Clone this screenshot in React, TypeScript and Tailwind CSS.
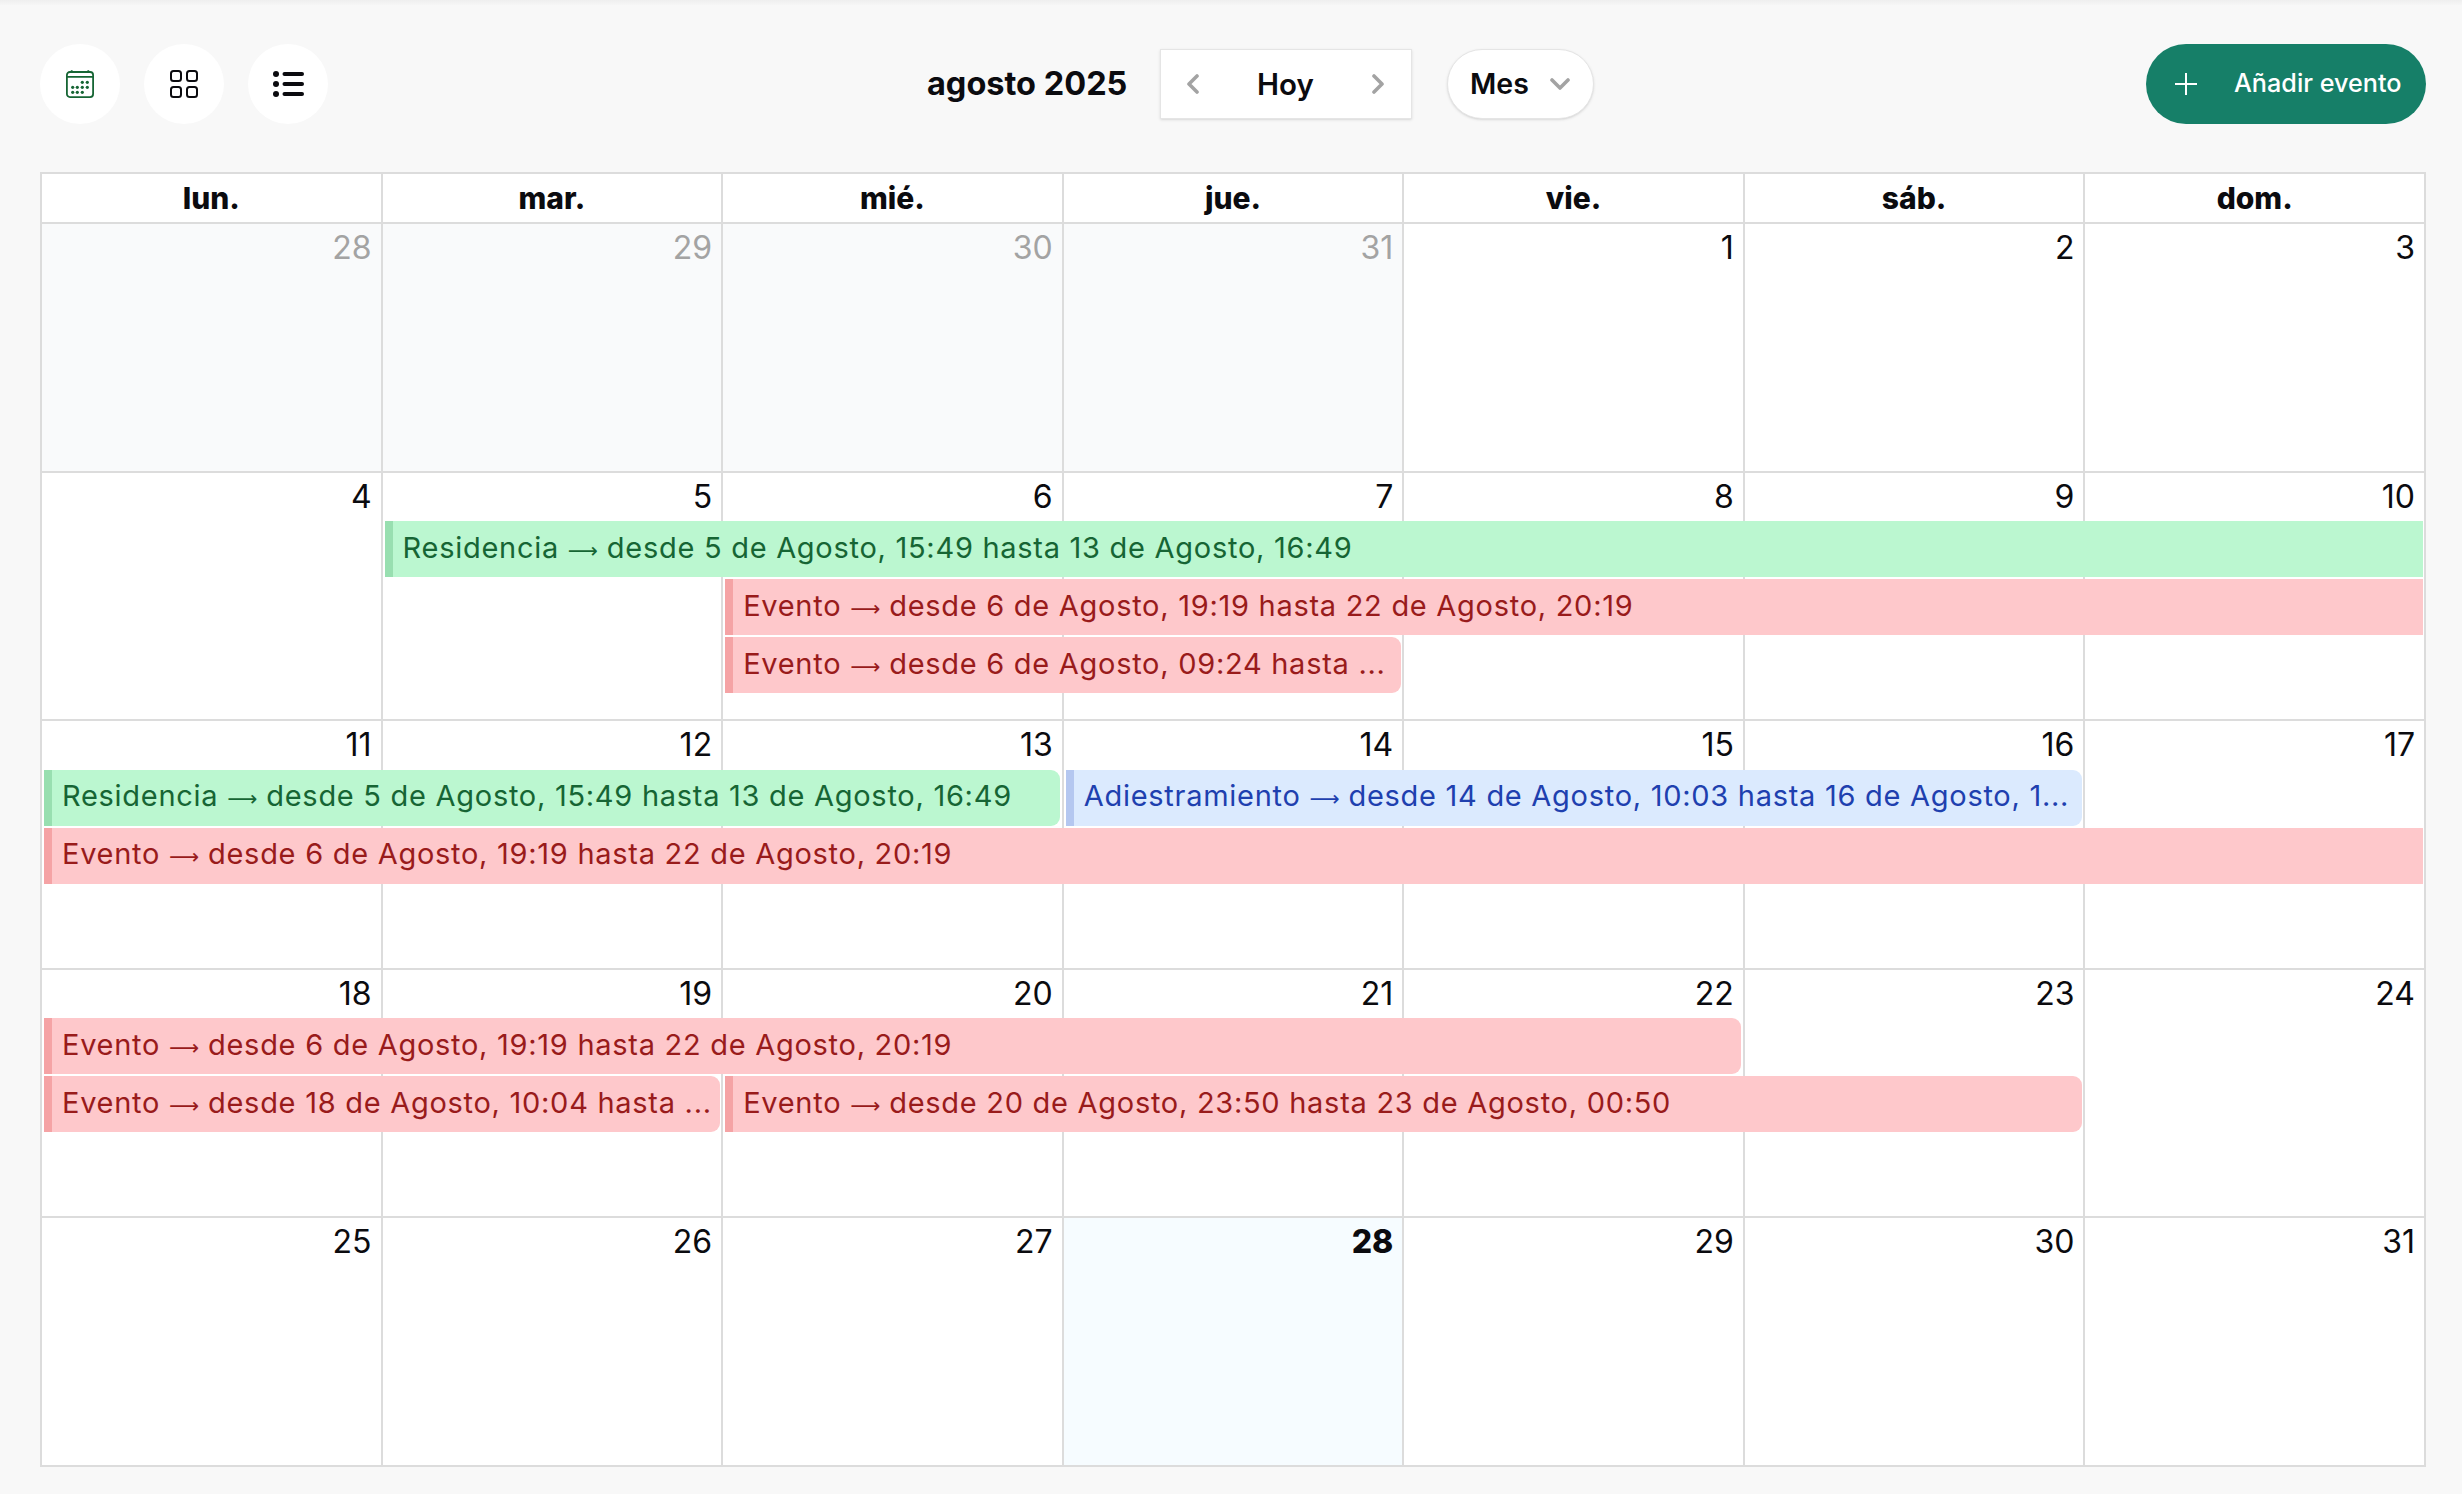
import React from 'react'

const FONT = '[font-family:Inter,"Liberation_Sans",sans-serif]'

const weekDays = ['lun.', 'mar.', 'mié.', 'jue.', 'vie.', 'sáb.', 'dom.']

const colClasses = ['col-start-1', 'col-start-2', 'col-start-3', 'col-start-4', 'col-start-5', 'col-start-6', 'col-start-7']

const tones = {
  green: { box: 'bg-[#bbf7d0] text-[#166534]', bar: 'bg-[#98dfb0]' },
  red: { box: 'bg-[#fec8cb] text-[#991b1b]', bar: 'bg-[#f5a3a5]' },
  blue: { box: 'bg-[#dbeafe] text-[#1e40af]', bar: 'bg-[#b4c7f0]' },
}

type Ev = {
  pos: string
  tone: keyof typeof tones
  label: string
  text: string
  rounded?: boolean
}

type Day = { n: number; muted?: boolean; today?: boolean }

const range = (a: number, b: number, extra = {}): Day[] => {
  const out: Day[] = []
  for (let i = a; i <= b; i++) out.push({ n: i, ...extra })
  return out
}

const residencia = 'desde 5 de Agosto, 15:49 hasta 13 de Agosto, 16:49'
const eventoLargo = 'desde 6 de Agosto, 19:19 hasta 22 de Agosto, 20:19'

const weeks: { days: Day[]; events: Ev[] }[] = [
  { days: [...range(28, 31, { muted: true }), ...range(1, 3)], events: [] },
  {
    days: range(4, 10),
    events: [
      { pos: 'col-start-2 col-end-8 row-start-2', tone: 'green', label: 'Residencia', text: residencia },
      { pos: 'col-start-3 col-end-8 row-start-3', tone: 'red', label: 'Evento', text: eventoLargo },
      { pos: 'col-start-3 col-end-5 row-start-4', tone: 'red', label: 'Evento', text: 'desde 6 de Agosto, 09:24 hasta ...', rounded: true },
    ],
  },
  {
    days: range(11, 17),
    events: [
      { pos: 'col-start-1 col-end-4 row-start-2', tone: 'green', label: 'Residencia', text: residencia, rounded: true },
      { pos: 'col-start-4 col-end-7 row-start-2', tone: 'blue', label: 'Adiestramiento', text: 'desde 14 de Agosto, 10:03 hasta 16 de Agosto, 1...', rounded: true },
      { pos: 'col-start-1 col-end-8 row-start-3', tone: 'red', label: 'Evento', text: eventoLargo },
    ],
  },
  {
    days: range(18, 24),
    events: [
      { pos: 'col-start-1 col-end-6 row-start-2', tone: 'red', label: 'Evento', text: eventoLargo, rounded: true },
      { pos: 'col-start-1 col-end-3 row-start-3', tone: 'red', label: 'Evento', text: 'desde 18 de Agosto, 10:04 hasta ...', rounded: true },
      { pos: 'col-start-3 col-end-7 row-start-3', tone: 'red', label: 'Evento', text: 'desde 20 de Agosto, 23:50 hasta 23 de Agosto, 00:50', rounded: true },
    ],
  },
  {
    days: [...range(25, 27), { n: 28, today: true }, ...range(29, 31)],
    events: [],
  },
]

const CalendarIcon = () => (
  <svg width="28" height="28" viewBox="0 0 28 28" fill="none" stroke="#166534" strokeWidth="1.8">
    <rect x="0.9" y="2" width="26.2" height="25.1" rx="3" />
    <path d="M1 6.8h26M5.7 0.2v2.2M22.3 0.2v2.2" />
    <g fill="#166534" stroke="none">
      <circle cx="16.3" cy="12.3" r="1.6" />
      <circle cx="21.3" cy="12.3" r="1.6" />
      <circle cx="6.7" cy="17.3" r="1.6" />
      <circle cx="11.3" cy="17.3" r="1.6" />
      <circle cx="16.3" cy="17.3" r="1.6" />
      <circle cx="21.3" cy="17.3" r="1.6" />
      <circle cx="6.7" cy="22.3" r="1.6" />
      <circle cx="11.3" cy="22.3" r="1.6" />
      <circle cx="16.3" cy="22.3" r="1.6" />
    </g>
  </svg>
)

const GridIcon = () => (
  <svg width="28" height="28" viewBox="0 0 28 28" fill="none" stroke="#0b0b0f" strokeWidth="2">
    <rect x="1" y="1" width="10" height="10" rx="2.5" />
    <rect x="17" y="1" width="10" height="10" rx="2.5" />
    <rect x="1" y="17" width="10" height="10" rx="2.5" />
    <rect x="17" y="17" width="10" height="10" rx="2.5" />
  </svg>
)

const ListIcon = () => (
  <svg width="31" height="28" viewBox="0 0 31 28" fill="#0b0b0f">
    <circle cx="3" cy="4" r="3" />
    <circle cx="3" cy="14" r="3" />
    <circle cx="3" cy="24" r="3" />
    <rect x="9.5" y="2" width="21.5" height="4" rx="2" />
    <rect x="9.5" y="12" width="21.5" height="4" rx="2" />
    <rect x="9.5" y="22" width="21.5" height="4" rx="2" />
  </svg>
)

const Chevron = ({ d, w, h }: { d: string; w: number; h: number }) => (
  <svg width={w} height={h} viewBox={`0 0 ${w} ${h}`} fill="none" stroke="#a3a3a3" strokeWidth="3.6" strokeLinecap="round" strokeLinejoin="round">
    <path d={d} />
  </svg>
)

const RoundBtn = ({ children }: { children: React.ReactNode }) => (
  <button className="flex h-20 w-20 items-center justify-center rounded-full bg-white">{children}</button>
)

const WeekRow = ({ days, events }: { days: Day[]; events: Ev[] }) => (
  <div className="grid h-[248.6px] grid-cols-7 grid-rows-[48.5px_58px_58px_58px_1fr] border-b-2 border-[#dcdcdc]">
    {days.map((d, i) => (
      <div
        key={i}
        className={`${colClasses[i]} row-start-1 row-end-6 border-r-2 border-[#dcdcdc] pr-[9px] pt-[3px] text-right text-[32px] leading-[42px] ${
          d.muted ? 'bg-[#f9fafb] text-[#a3a3a3]' : d.today ? 'bg-[#f6fcff] font-extrabold text-[#0b0b0f]' : 'bg-white text-[#0b0b0f]'
        }`}
      >
        {d.n}
      </div>
    ))}
    {events.map((e, i) => (
      <div
        key={i}
        className={`${e.pos} z-10 ml-[2px] mr-[3.5px] flex h-14 items-center overflow-hidden ${tones[e.tone].box} ${e.rounded ? 'rounded-r-[9px]' : ''}`}
      >
        <span className={`h-full w-2 shrink-0 ${tones[e.tone].bar}`} />
        <span className="truncate pl-[10px] text-[29px] leading-[40px] tracking-[0.72px]">
          {e.label} <span className="[font-family:'DejaVu_Sans',sans-serif] text-[21px] tracking-normal">⟶</span> {e.text}
        </span>
      </div>
    ))}
  </div>
)

export default function App() {
  return (
    <div className={`${FONT} min-h-[1494px] bg-[#f8f8f8] text-[#0b0b0f]`}>
      <div className="h-[5px] bg-gradient-to-b from-[#efefef] to-[#f6f6f6]" />
      <div className="pl-10 pr-9 pt-[39px]">
        {/* Toolbar */}
        <div className="flex h-20 items-center">
          <div className="flex gap-6">
            <RoundBtn><CalendarIcon /></RoundBtn>
            <RoundBtn><GridIcon /></RoundBtn>
            <RoundBtn><ListIcon /></RoundBtn>
          </div>

          <div className="ml-[599px] flex items-center">
            <h2 className="w-[233px] text-[32.5px] font-bold leading-[40px]">agosto 2025</h2>
            <div className="flex h-[70px] w-[252px] items-center justify-between border border-[#e5e5e5] bg-white pl-[25px] pr-[26px] shadow-sm">
              <Chevron w={13} h={20} d="M11 2L3 10l8 8" />
              <span className="text-[29.5px] font-semibold">Hoy</span>
              <Chevron w={13} h={20} d="M2 2l8 8-8 8" />
            </div>
            <div className="ml-[35px] flex h-[70px] w-[147px] items-center rounded-full border border-[#e5e5e5] bg-white pl-[22px] shadow-sm">
              <span className="text-[28.5px] font-semibold">Mes</span>
              <span className="ml-[21px]">
                <Chevron w={20} h={12} d="M2 2l8 8 8-8" />
              </span>
            </div>
          </div>

          <button className="ml-auto flex h-20 w-[280px] items-center rounded-full bg-[#167f68] pl-[29px] text-white">
            <svg width="22" height="22" viewBox="0 0 22 22" stroke="#ffffff" strokeWidth="2">
              <path d="M11 0v22M0 11h22" />
            </svg>
            <span className="ml-[37px] text-[25.2px] font-medium">Añadir evento</span>
          </button>
        </div>

        {/* Calendar */}
        <div className="mt-12 border-l-2 border-t-2 border-[#dcdcdc]">
          <div className="grid h-[50px] grid-cols-7 border-b-2 border-[#dcdcdc] bg-white">
            {weekDays.map((d) => (
              <div key={d} className="flex items-center justify-center border-r-2 border-[#dcdcdc] text-[30px] font-extrabold">
                {d}
              </div>
            ))}
          </div>
          {weeks.map((w, i) => (
            <WeekRow key={i} days={w.days} events={w.events} />
          ))}
        </div>
      </div>
    </div>
  )
}
